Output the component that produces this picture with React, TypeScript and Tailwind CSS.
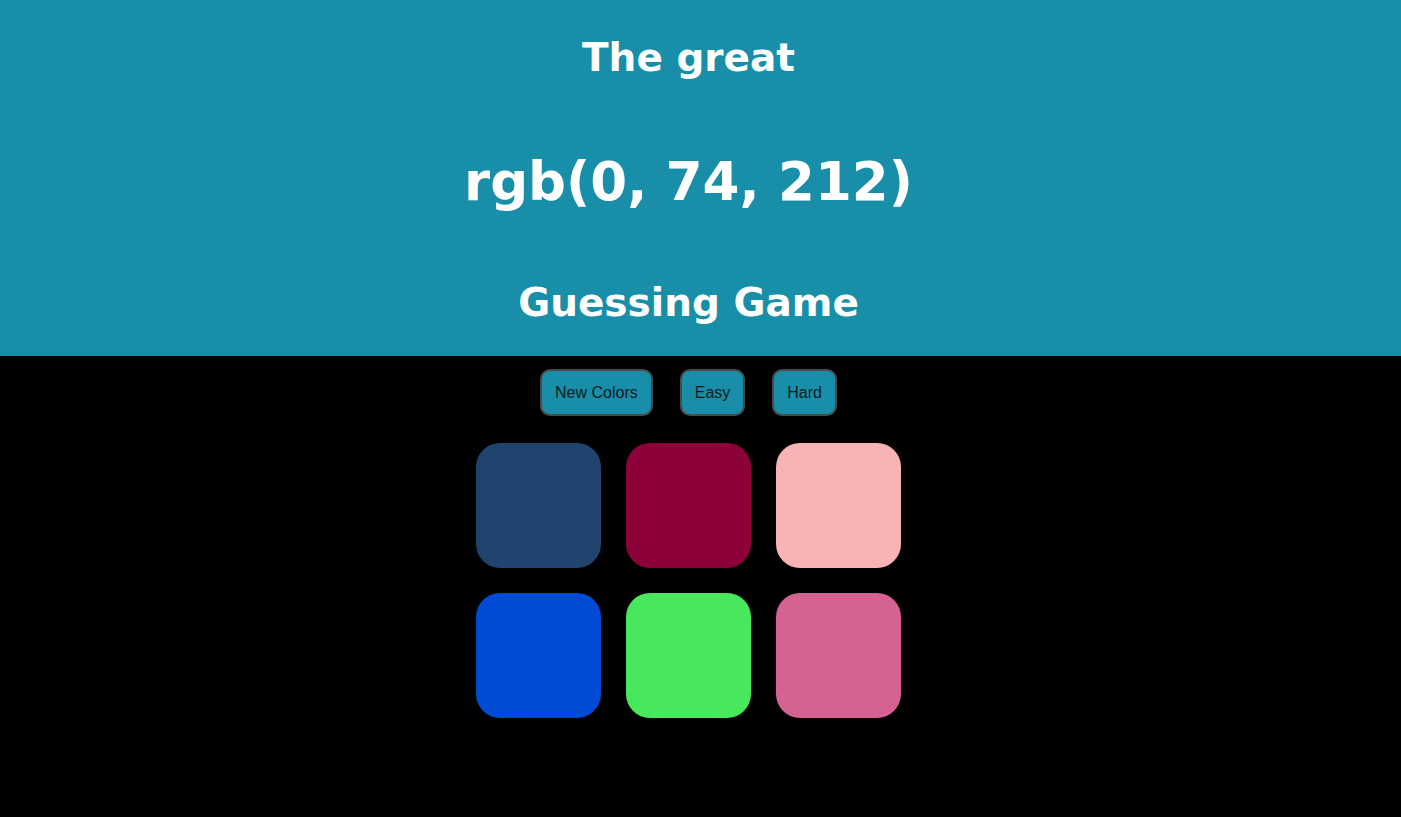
import React from "react";

const colors = ["#1f456e", "#8c013a", "#f8b4b4", "#004ad4", "#48e85c", "#d66294"];

export default function App() {
  return (
    <div className="min-h-[817px] w-full bg-black">
      <header className="bg-[#188ea8] pr-[24px]">
        <div className="flex h-[356px] flex-col items-center text-white font-['DejaVu_Sans',Verdana,sans-serif] font-bold">
          <div className="flex h-[114px] items-center text-[39px] leading-none">The great</div>
          <div className="flex h-[134px] items-center text-[53px] leading-none">rgb(0, 74, 212)</div>
          <div className="flex h-[108px] items-center text-[39px] leading-none">Guessing Game</div>
        </div>
      </header>
      <div className="pr-[24px]">
        <div className="flex justify-center gap-[27px] pt-[13px] font-['Liberation_Sans',Arial,sans-serif] text-[16px] text-[#0d1a1e]">
          <button className="h-[47px] rounded-[10px] border-2 border-[#4a4a4a] bg-[#188ea8] px-[13px]">New Colors</button>
          <button className="h-[47px] rounded-[10px] border-2 border-[#4a4a4a] bg-[#188ea8] px-[13px]">Easy</button>
          <button className="h-[47px] rounded-[10px] border-2 border-[#4a4a4a] bg-[#188ea8] px-[13px]">Hard</button>
        </div>
        <div className="mx-auto mt-[27px] grid w-[425px] grid-cols-3 gap-[25px]">
          {colors.map((c) => (
            <div key={c} className="h-[125px] w-[125px] rounded-[24px]" style={{ backgroundColor: c }} />
          ))}
        </div>
      </div>
    </div>
  );
}
